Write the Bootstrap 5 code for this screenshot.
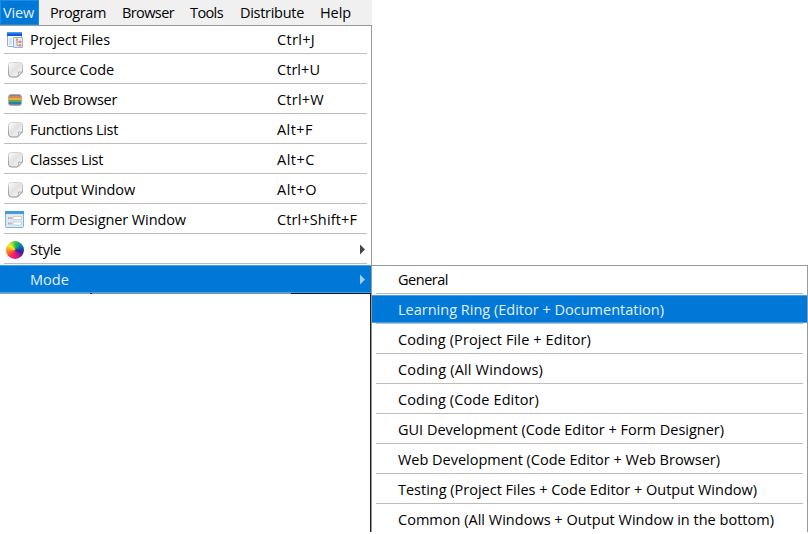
<!DOCTYPE html>
<html lang="en">
<head>
<meta charset="utf-8">
<meta name="viewport" content="width=device-width, initial-scale=1">
<title>View menu</title>
<link href="https://cdn.jsdelivr.net/npm/bootstrap@5.3.0/dist/css/bootstrap.min.css" rel="stylesheet">
<style>
body{font:14.5px/20px "Open Sans","Noto Sans",sans-serif;color:#000;background:#fff;width:808px;height:534px;overflow:hidden}
.menubar{width:372px;height:25px;background:#f0f0f0}
.menubar .nav-link{padding:0;line-height:25px;color:#000;height:25px;flex:none;white-space:nowrap}
.menubar .nav-link.active{width:39px;background:#0078d7;color:#e8f1fa;box-shadow:inset 0 0 0 1px #1c8be6}
.main-menu{width:372px;height:268px;border-top:1px solid #999;border-right:1px solid #999}
.sub-menu{width:437px;height:267px;margin-left:-1px;margin-top:240px;border:1px solid #999;border-bottom:0}
.backdrop{width:371px;height:239px;border-right:1px solid #1a1a2e}
.entry{height:30px;position:relative;white-space:nowrap}
.entry:first-child{margin-top:-1px}
.entry::after{content:"";position:absolute;left:4px;right:4px;top:28px;height:1px;background:#bdbdbd}
.entry:last-child::after{display:none}
.entry .face{height:28px;padding-top:1px}
.entry.chosen .face{background:#0078d7;color:#e3effa;box-shadow:inset 0 1px #3ba3f5,inset 0 -1px #3ba3f5}
.pic{width:30px;height:20px;padding-left:5px;flex:none}
.pic svg{display:block}
.keys{width:94px}
.arrow{width:9px}
.sub-menu .face{padding-left:26px}
.strip{height:1px;width:370px;background:linear-gradient(90deg,#8c9aa8 0 90px,#222 90px 92px,#8492a0 92px 291px,#111 291px)}
.wheel{width:18px;height:18px;margin:1px;border-radius:50%;background:conic-gradient(#3fc13c,#0b9e83 35deg,#1267b8 65deg,#2d2798 105deg,#a01b93 140deg,#e81589 175deg,#fa2464 205deg,#fa5a28 240deg,#fda515 275deg,#fbec2d 310deg,#a1dd36 335deg,#3fc13c)}
</style>
<script src="https://cdn.jsdelivr.net/npm/bootstrap@5.3.0/dist/js/bootstrap.bundle.min.js"></script>
</head>
<body>
<svg width="0" height="0" class="position-absolute">
<defs>
<linearGradient id="paper" x2="1" y2="1"><stop stop-color="#fff"/><stop offset=".45" stop-color="#e2e2e2"/><stop offset="1" stop-color="#fafafa"/></linearGradient>
<linearGradient id="edge" x2="0" y2="1"><stop stop-color="#d4d4d4"/><stop offset="1" stop-color="#8f8f8f"/></linearGradient>
<symbol id="note" viewBox="0 0 20 20"><path d="M6.500 2.500h8q3 0 3 3v6.500l-5 5h-6q-3 0-3-3v-8.500q0-3 3-3Z" fill="url(#paper)" stroke="url(#edge)"/><path d="M17.300 11.800q-1.500.8-3.800.2q.6 2.500-.9 4.700Z" fill="#fff" stroke="#9c9c9c" stroke-width=".8"/></symbol>
</defs></svg>
<nav class="menubar nav flex-nowrap" id="bar">
<a class="nav-link active"><span class="t" data-x="4" data-w="31">View</span></a>
<a class="nav-link"><span class="t" data-x="51" data-w="56">Program</span></a>
<a class="nav-link"><span class="t" data-x="123" data-w="52">Browser</span></a>
<a class="nav-link"><span class="t" data-x="191" data-w="33">Tools</span></a>
<a class="nav-link"><span class="t" data-x="241" data-w="64">Distribute</span></a>
<a class="nav-link"><span class="t" data-x="321" data-w="31">Help</span></a>
</nav>
<main class="d-flex align-items-start">
<div class="flex-shrink-0">
<div class="main-menu" id="main"></div>
<div class="backdrop"><div class="strip"></div></div>
</div>
<div class="sub-menu flex-shrink-0" id="sub"></div>
</main>
<script>
const note='<svg width="20" height="20"><use href="#note"/></svg>';
const icons={
files:'<svg width="20" height="20" viewBox="0 0 20 20"><rect x="2.500" y="2.500" width="14" height="14" rx="1" fill="#f3f7fd" stroke="#93aedb"/><path d="M2 2h15v4H2Z" fill="#1558dc"/><path d="M2 2h15v1.500H2Z" fill="#4a98f5"/><path d="M4 8h3v7H4Z" fill="#d3e1f6"/><path d="M8.500 7.500h9v10h-9Z" fill="#e3ebf8" stroke="#9db2d6"/><path d="M12 10v5.500h2.500M12 12h2.500" fill="none" stroke="#a9a3b0"/><path d="M11 8.500h2v2h-2Zm3 2.200h2.300v2.300H14Zm0 3.500h2.300v2.300H14Z" fill="#f08a45"/></svg>',
note,
web:'<svg width="20" height="20" viewBox="0 0 20 20"><rect x="3.500" y="4.500" width="13" height="11" rx="2.500" fill="#7b858d" stroke="#a9b0b5"/><path d="M4 6h12v2H4Z" fill="#d08a4e"/><path d="M4 8h12v2H4Z" fill="#f2ae35"/><path d="M4 10h12v2H4Z" fill="#5fa863"/><path d="M4 12h12v2H4Z" fill="#2683a0"/></svg>',
form:'<svg width="20" height="20" viewBox="0 0 20 20"><rect x=".5" y="1.500" width="18" height="16" rx="1" fill="#e2eaf0" stroke="#7fb6dd"/><path d="M0 1h19v3H0Z" fill="#459bd4"/><path d="M3 8h4M3 13.500h4" stroke="#a8b0b7" stroke-width="2" stroke-dasharray="1.500 .7"/><path d="M8 6.500h8.500v3H8Zm0 5.500h8.500v3H8Z" fill="#fff" stroke="#b9c2ca" stroke-width=".7"/></svg>',
wheel:'<span class="wheel d-block"></span>'};
const left=[["files","Project Files",80,"Ctrl+J",38],["note","Source Code",84,"Ctrl+U",43],["web","Web Browser",87,"Ctrl+W",47],["note","Functions List",88,"Alt+F",36],["note","Classes List",73,"Alt+C",38],["note","Output Window",105,"Alt+O",40],["form","Form Designer Window",156,"Ctrl+Shift+F",80],["wheel","Style",31],["","Mode",39]];
const right=[["General",50],["Learning Ring (Editor + Documentation)",266],["Coding (Project File + Editor)",193],["Coding (All Windows)",145],["Coding (Code Editor)",141],["GUI Development (Code Editor + Form Designer)",326],["Web Development (Code Editor + Web Browser)",322],["Testing (Project Files + Code Editor + Output Window)",359],["Common (All Windows + Output Window in the bottom)",376]];
const arrow='<svg class="arrow" width="9" height="12" viewBox="0 0 9 12"><path d="M2 .5v10l5-5Z" fill="currentColor" opacity=".72"/></svg>';
const label=(s,w)=>`<span class="t" data-w="${w}">${s}</span>`;
main.innerHTML=left.map(r=>`<div class="entry ${r[1]=='Mode'?'chosen':''}"><div class="face d-flex align-items-center"><span class="pic">${icons[r[0]]||''}</span>${label(r[1],r[2])}${r[3]?`<span class="keys ms-auto">${label(r[3],r[4])}</span>`:`<span class="ms-auto d-flex pe-1">${arrow}</span>`}</div></div>`).join('');
sub.innerHTML=right.map((r,i)=>`<div class="entry ${i==1?'chosen':''}"><div class="face d-flex align-items-center">${label(...r)}</div></div>`).join('');
document.querySelectorAll('.t').forEach(e=>{
 const n=e.textContent.length,w=e.getBoundingClientRect().width;
 e.style.letterSpacing=((+e.dataset.w-w)/n)+'px';
});
document.querySelectorAll('#bar .t').forEach(e=>{
 e.style.marginLeft=(+e.dataset.x-e.getBoundingClientRect().left-1)+'px';
});
</script>
</body>
</html>
